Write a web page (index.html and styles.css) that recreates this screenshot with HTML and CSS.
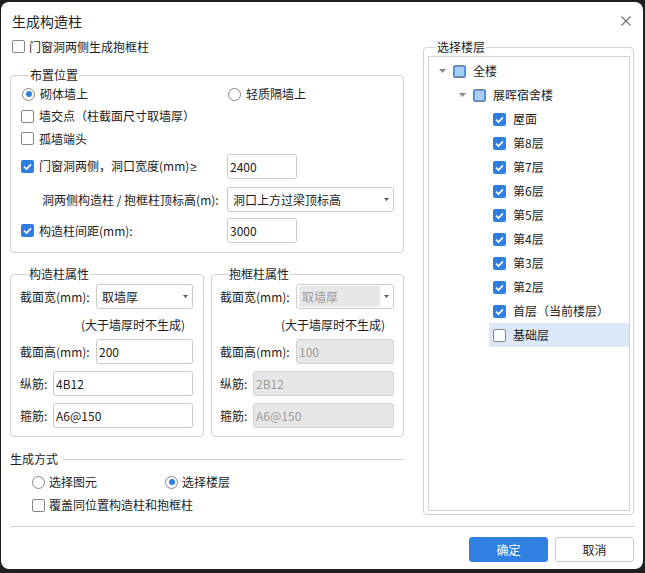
FILE: index.html
```html
<!DOCTYPE html>
<html lang="zh">
<head>
<meta charset="utf-8">
<title>生成构造柱</title>
<link rel="stylesheet" href="styles.css">
</head>
<body>
<div class="dialog">
  <div class="titlebar">
    <span class="title">生成构造柱</span>
    <svg class="close" width="10" height="10" viewBox="0 0 10 10"><path d="M0.5 0.5 L9.5 9.5 M9.5 0.5 L0.5 9.5" stroke="#6e6e6e" stroke-width="1.1"/></svg>
  </div>

  <div class="main">
    <div class="left">
      <div class="top-check"><span class="cb"></span><span>门窗洞两侧生成抱框柱</span></div>

      <fieldset class="group place">
        <legend>布置位置</legend>
        <div class="prow h22">
          <span class="opt"><span class="rd on"></span>砌体墙上</span>
          <span class="opt second"><span class="rd"></span>轻质隔墙上</span>
        </div>
        <div class="prow h22">
          <span class="opt"><span class="cb"></span>墙交点（柱截面尺寸取墙厚）</span>
        </div>
        <div class="prow h23">
          <span class="opt"><span class="cb"></span>孤墙端头</span>
        </div>
        <div class="prow h25 mt4">
          <span class="opt"><svg class="cbx" viewBox="0 0 13 13"><rect width="13" height="13" rx="2" fill="#2f7fe0"/><path d="M3.1 6.6 5.5 9 10 4.3" fill="none" stroke="#fff" stroke-width="1.7"/></svg><span>门窗洞两侧，洞口宽度(mm)<span class="sym">≥</span></span></span>
          <div class="inp w70">2400</div>
        </div>
        <div class="prow h25 mt8">
          <span class="indent-lbl">洞两侧构造柱 / 抱框柱顶标高(m):</span>
          <div class="sel w167"><span class="val">洞口上方过梁顶标高</span><span class="caret"><svg width="5" height="3" viewBox="0 0 5 3"><path d="M0 0H5L2.5 3Z" fill="#555"/></svg></span></div>
        </div>
        <div class="prow h25 mt6">
          <span class="opt"><svg class="cbx" viewBox="0 0 13 13"><rect width="13" height="13" rx="2" fill="#2f7fe0"/><path d="M3.1 6.6 5.5 9 10 4.3" fill="none" stroke="#fff" stroke-width="1.7"/></svg>构造柱间距(mm):</span>
          <div class="inp w70">3000</div>
        </div>
      </fieldset>

      <div class="props">
        <fieldset class="group prop gz">
          <legend>构造柱属性</legend>
          <div class="frow">
            <span class="lbl">截面宽(mm):</span>
            <div class="sel ctl"><span class="val">取墙厚</span><span class="caret"><svg width="5" height="3" viewBox="0 0 5 3"><path d="M0 0H5L2.5 3Z" fill="#555"/></svg></span></div>
          </div>
          <div class="note">(大于墙厚时不生成)</div>
          <div class="frow">
            <span class="lbl">截面高(mm):</span>
            <div class="inp ctl">200</div>
          </div>
          <div class="frow mt7">
            <span class="lbl short">纵筋:</span>
            <div class="inp ctl">4B12</div>
          </div>
          <div class="frow mt7">
            <span class="lbl short">箍筋:</span>
            <div class="inp ctl">A6@150</div>
          </div>
        </fieldset>

        <fieldset class="group prop bk">
          <legend>抱框柱属性</legend>
          <div class="frow">
            <span class="lbl">截面宽(mm):</span>
            <div class="sel ctl dis"><span class="val">取墙厚</span><span class="caret"><svg width="5" height="3" viewBox="0 0 5 3"><path d="M0 0H5L2.5 3Z" fill="#555"/></svg></span></div>
          </div>
          <div class="note">(大于墙厚时不生成)</div>
          <div class="frow">
            <span class="lbl">截面高(mm):</span>
            <div class="inp ctl dis">100</div>
          </div>
          <div class="frow mt7">
            <span class="lbl short">纵筋:</span>
            <div class="inp ctl dis">2B12</div>
          </div>
          <div class="frow mt7">
            <span class="lbl short">箍筋:</span>
            <div class="inp ctl dis">A6@150</div>
          </div>
        </fieldset>
      </div>

      <div class="mode">
        <div class="mode-head"><span>生成方式</span></div>
        <div class="mode-radios">
          <span class="opt g4"><span class="rd"></span>选择图元</span>
          <span class="opt g4"><span class="rd on"></span>选择楼层</span>
        </div>
        <div class="mode-check">
          <span class="opt g4"><span class="cb"></span>覆盖同位置构造柱和抱框柱</span>
        </div>
      </div>
    </div>

    <div class="right">
      <fieldset class="group floors">
        <legend>选择楼层</legend>
        <div class="tree">
          <div class="trow lvl0">
            <span class="exp"><svg width="7" height="4" viewBox="0 0 7 4"><path d="M0 0H7L3.5 4Z" fill="#8a8a8a"/></svg></span>
            <span class="item"><span class="cb part"></span>全楼</span>
          </div>
          <div class="trow lvl1">
            <span class="exp"><svg width="7" height="4" viewBox="0 0 7 4"><path d="M0 0H7L3.5 4Z" fill="#8a8a8a"/></svg></span>
            <span class="item"><span class="cb part"></span>展晖宿舍楼</span>
          </div>
          <div class="trow lvl2"><span class="exp"></span><span class="item"><svg class="cbx" viewBox="0 0 13 13"><rect width="13" height="13" rx="2" fill="#2f7fe0"/><path d="M3.1 6.6 5.5 9 10 4.3" fill="none" stroke="#fff" stroke-width="1.7"/></svg>屋面</span></div>
          <div class="trow lvl2"><span class="exp"></span><span class="item"><svg class="cbx" viewBox="0 0 13 13"><rect width="13" height="13" rx="2" fill="#2f7fe0"/><path d="M3.1 6.6 5.5 9 10 4.3" fill="none" stroke="#fff" stroke-width="1.7"/></svg>第8层</span></div>
          <div class="trow lvl2"><span class="exp"></span><span class="item"><svg class="cbx" viewBox="0 0 13 13"><rect width="13" height="13" rx="2" fill="#2f7fe0"/><path d="M3.1 6.6 5.5 9 10 4.3" fill="none" stroke="#fff" stroke-width="1.7"/></svg>第7层</span></div>
          <div class="trow lvl2"><span class="exp"></span><span class="item"><svg class="cbx" viewBox="0 0 13 13"><rect width="13" height="13" rx="2" fill="#2f7fe0"/><path d="M3.1 6.6 5.5 9 10 4.3" fill="none" stroke="#fff" stroke-width="1.7"/></svg>第6层</span></div>
          <div class="trow lvl2"><span class="exp"></span><span class="item"><svg class="cbx" viewBox="0 0 13 13"><rect width="13" height="13" rx="2" fill="#2f7fe0"/><path d="M3.1 6.6 5.5 9 10 4.3" fill="none" stroke="#fff" stroke-width="1.7"/></svg>第5层</span></div>
          <div class="trow lvl2"><span class="exp"></span><span class="item"><svg class="cbx" viewBox="0 0 13 13"><rect width="13" height="13" rx="2" fill="#2f7fe0"/><path d="M3.1 6.6 5.5 9 10 4.3" fill="none" stroke="#fff" stroke-width="1.7"/></svg>第4层</span></div>
          <div class="trow lvl2"><span class="exp"></span><span class="item"><svg class="cbx" viewBox="0 0 13 13"><rect width="13" height="13" rx="2" fill="#2f7fe0"/><path d="M3.1 6.6 5.5 9 10 4.3" fill="none" stroke="#fff" stroke-width="1.7"/></svg>第3层</span></div>
          <div class="trow lvl2"><span class="exp"></span><span class="item"><svg class="cbx" viewBox="0 0 13 13"><rect width="13" height="13" rx="2" fill="#2f7fe0"/><path d="M3.1 6.6 5.5 9 10 4.3" fill="none" stroke="#fff" stroke-width="1.7"/></svg>第2层</span></div>
          <div class="trow lvl2"><span class="exp"></span><span class="item"><svg class="cbx" viewBox="0 0 13 13"><rect width="13" height="13" rx="2" fill="#2f7fe0"/><path d="M3.1 6.6 5.5 9 10 4.3" fill="none" stroke="#fff" stroke-width="1.7"/></svg>首层（当前楼层）</span></div>
          <div class="trow lvl2"><span class="exp"></span><span class="item selected"><span class="cb"></span>基础层</span></div>
        </div>
      </fieldset>
    </div>
  </div>

  <div class="sep"></div>
  <div class="footer">
    <button class="btn primary">确定</button>
    <button class="btn">取消</button>
  </div>
</div>
</body>
</html>
```
FILE: styles.css
```css
* { box-sizing: border-box; }
html, body { margin: 0; padding: 0; }
body {
  width: 645px;
  height: 573px;
  overflow: hidden;
  background: #1f1f1f;
  font-family: "Noto Sans CJK SC", "Microsoft YaHei", sans-serif;
  font-size: 12px;
  line-height: 16px;
  color: #1b1b1b;
}
.dialog {
  margin: 2px 0 0 1px;
  width: 642px;
  height: 567px;
  background: #fff;
  border-radius: 8px;
  display: flex;
  flex-direction: column;
}
.titlebar {
  height: 37px;
  display: flex;
  align-items: center;
  justify-content: space-between;
  padding: 0 12px 0 11px;
}
.title { font-size: 14px; color: #1f1f1f; }
.close { display: block; }

.main {
  display: flex;
  gap: 19px;
  padding-left: 9px;
  height: 477px;
}
.left { width: 394px; display: flex; flex-direction: column; }
.right { width: 211px; }

/* controls */
.cb {
  display: inline-flex;
  align-items: center;
  justify-content: center;
  width: 13px;
  height: 13px;
  border: 1px solid #858585;
  border-radius: 2px;
  background: #fff;
  flex: none;
}
.cb.part { border-color: #7d7d7d; }
.cb.part::after {
  content: "";
  width: 9px;
  height: 9px;
  background: #a7cdfb;
  border: 1px solid #5b99e4;
}
.cbx { width: 13px; height: 13px; display: block; flex: none; }
.rd {
  display: inline-flex;
  align-items: center;
  justify-content: center;
  width: 13px;
  height: 13px;
  border: 1px solid #858585;
  border-radius: 50%;
  background: #fff;
  flex: none;
}
.rd.on::after {
  content: "";
  width: 6px;
  height: 6px;
  border-radius: 50%;
  background: #2f7fe0;
}
.opt { display: flex; align-items: center; gap: 5px; white-space: nowrap; }
.opt .rd { margin-left: 1px; }
.opt.g4 { gap: 4px; }
.opt.g4 .rd { margin-left: 0; }
.sym { font-family: "Liberation Sans", "DejaVu Sans", sans-serif; margin-left: 1px; }

.inp {
  height: 25px;
  border: 1px solid #cbcbcb;
  border-radius: 3px;
  padding-left: 2px;
  display: flex;
  align-items: center;
  background: #fff;
  color: #1b1b1b;
}
.inp.dis { background: #e7e7e7; color: #9c9c9c; border-color: #d2d2d2; }
.sel {
  height: 25px;
  border: 1px solid #cbcbcb;
  border-radius: 3px;
  display: flex;
  align-items: stretch;
  background: #fff;
}
.sel .val { flex: 1; display: flex; align-items: center; padding-left: 5px; }
.sel .caret { width: 13px; display: flex; align-items: center; justify-content: center; }
.sel.dis .val {
  margin: 1px 0 1px 2px;
  padding-left: 3px;
  background: #e7e7e7;
  border-radius: 2px;
  color: #9c9c9c;
}
.w70 { width: 70px; }
.w167 { width: 167px; }

/* group boxes */
.group {
  border: 1px solid #d2d2d2;
  border-radius: 4px;
  margin: 0;
  min-width: 0;
}
.group legend {
  padding: 0 1px;
  margin-left: 8px;
  line-height: 16px;
}

.top-check {
  margin: 1px 0 0 2px;
  height: 13px;
  display: flex;
  align-items: center;
  gap: 4px;
}

.place { margin-top: 14px; padding: 0 10px 9px 10px; }
.prow { display: grid; grid-template-columns: 206px auto; align-items: center; }
.h22 { height: 22px; }
.h23 { height: 23px; }
.h25 { height: 25px; }
.mt4 { margin-top: 4px; }
.mt6 { margin-top: 6px; }
.mt7 { margin-top: 7px; }
.mt8 { margin-top: 8px; }
.indent-lbl { padding-left: 21px; white-space: nowrap; }

.props { display: flex; gap: 7px; margin-top: 13px; }
.prop.gz { width: 194px; padding: 2px 10px 8px 9px; }
.prop.bk { width: 193px; padding: 2px 9px 8px 8px; }
.frow { display: flex; align-items: center; height: 25px; }
.lbl { width: 76px; flex: none; white-space: nowrap; }
.lbl.short { width: 33px; }
.ctl { flex: 1; }
.note { height: 30px; padding: 2px 0 0 61px; display: flex; align-items: center; white-space: nowrap; }

.mode { margin-top: 11px; }
.mode-head { height: 22px; display: flex; align-items: center; gap: 5px; margin-right: -1px; }
.mode-head::after { content: ""; flex: 1; height: 1px; background: #d0d0d0; }
.mode-radios {
  height: 24px;
  padding-left: 22px;
  display: grid;
  grid-template-columns: 133px auto;
  align-items: center;
}
.mode-check { height: 22px; padding-left: 22px; display: flex; align-items: center; }

/* floors */
.floors { height: 476px; padding: 1px 3px 3px 4px; }
.floors legend { margin-left: 8px; }
.tree {
  height: 455px;
  border: 1px solid #d2d2d2;
  padding-top: 2px;
}
.trow { display: flex; height: 24px; }
.trow.lvl0 { padding-left: 10px; }
.trow.lvl1 { padding-left: 30px; }
.trow.lvl2 { padding-left: 50px; }
.exp { width: 10px; flex: none; display: flex; align-items: center; }
.exp svg { display: block; margin-top: -1px; }
.item { flex: 1; display: flex; align-items: center; gap: 7px; padding-left: 4px; white-space: nowrap; }
.item.selected { background: #dce8f8; }

/* footer */
.sep { height: 1px; background: #d0d0d0; margin: 10px 8px 0 9px; }
.footer { display: flex; justify-content: flex-end; gap: 7px; padding-right: 9px; margin-top: 10px; }
.btn {
  width: 79px;
  height: 25px;
  border: 1px solid #c9c9c9;
  border-radius: 3px;
  background: #fff;
  font-family: inherit;
  font-size: 12px;
  color: #1b1b1b;
  padding: 0;
}
.btn.primary { background: #2f80e1; border-color: #2f80e1; color: #fff; }
```
